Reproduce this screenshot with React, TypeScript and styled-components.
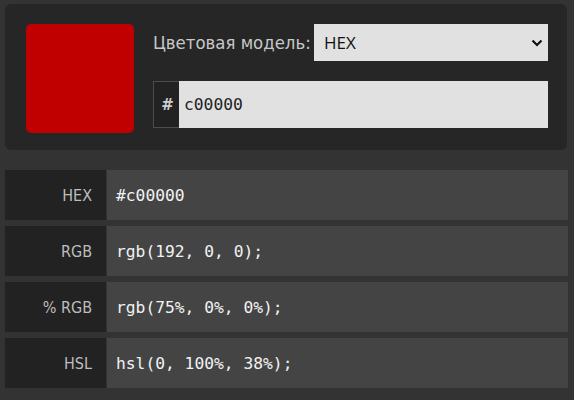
import React from "react";
import styled, { createGlobalStyle } from "styled-components";

const Global = createGlobalStyle`
  html, body { margin: 0; padding: 0; background: #333333; }
  body { font-family: "Open Sans", "Noto Sans", sans-serif; }
`;

const Page = styled.div`
  width: 574px;
  height: 400px;
  box-sizing: border-box;
  padding: 4px 6px 0 5px;
  display: flex;
  flex-direction: column;
  gap: 20px;
`;

const Panel = styled.section`
  background: #262626;
  border-radius: 6px;
  padding: 20px 19px 17px 21px;
  display: flex;
  gap: 19px;
  margin-right: 1px;
`;

const Swatch = styled.div<{ $color: string }>`
  width: 108px;
  height: 109px;
  border-radius: 5px;
  background: ${(p) => p.$color};
  flex: none;
`;

const Controls = styled.div`
  flex: 1;
  display: flex;
  flex-direction: column;
  gap: 20px;
`;

const ModelRow = styled.div`
  display: flex;
  align-items: center;
  gap: 6px;
`;

const ModelLabel = styled.label`
  font-family: "DejaVu Sans Condensed", "Open Sans", sans-serif;
  font-stretch: condensed;
  font-size: 18.4px;
  color: #c8c8c8;
  white-space: nowrap;
  width: 155px;
`;

const SelectWrap = styled.div`
  position: relative;
  flex: 1;
  height: 37px;
`;

const Select = styled.select`
  appearance: none;
  width: 100%;
  height: 100%;
  border: none;
  border-radius: 0;
  background: #e1e1e1;
  color: #111;
  font-family: "Open Sans", sans-serif;
  font-size: 17px;
  padding: 0 0 0 10px;
  outline: none;
`;

const Chevron = styled.svg`
  position: absolute;
  right: 5px;
  top: 15px;
  pointer-events: none;
`;

const HashRow = styled.div`
  display: flex;
  height: 47px;
`;

const HashMark = styled.span`
  box-sizing: border-box;
  border: 1px solid #4c4c4c;
  border-right: none;
  background: #222;
  color: #cfcfcf;
  font-family: "DejaVu Sans", sans-serif;
  font-weight: bold;
  font-size: 15px;
  display: flex;
  align-items: center;
  justify-content: center;
  padding-left: 2px;
  width: 26px;
`;

const HexInput = styled.input`
  flex: 1;
  border: none;
  border-radius: 0;
  background: #e1e1e1;
  color: #222;
  font-family: "DejaVu Sans Mono", monospace;
  font-size: 16.3px;
  padding: 0 0 0 5px;
  outline: none;
`;

const Rows = styled.div`
  display: flex;
  flex-direction: column;
  gap: 6px;
`;

const Row = styled.div`
  display: grid;
  grid-template-columns: 101px 1fr;
  gap: 1px;
  height: 50px;
`;

const RowLabel = styled.div`
  background: #222222;
  color: #bdbdbd;
  font-family: "DejaVu Sans Condensed", "Open Sans", sans-serif;
  font-stretch: condensed;
  font-size: 16px;
  display: flex;
  align-items: center;
  justify-content: flex-end;
  padding-right: 14px;
`;

const RowValue = styled.div`
  background: #444444;
  color: #f2f2f2;
  font-family: "DejaVu Sans Mono", monospace;
  font-size: 16.3px;
  display: flex;
  align-items: center;
  padding-left: 9px;
`;

const formats = [
  { label: "HEX", value: "#c00000" },
  { label: "RGB", value: "rgb(192, 0, 0);" },
  { label: "% RGB", value: "rgb(75%, 0%, 0%);" },
  { label: "HSL", value: "hsl(0, 100%, 38%);" },
];

export default function App() {
  return (
    <>
      <Global />
      <Page>
        <Panel>
          <Swatch $color="#c00000" />
          <Controls>
            <ModelRow>
              <ModelLabel>Цветовая модель:</ModelLabel>
              <SelectWrap>
                <Select defaultValue="HEX">
                  <option value="HEX">HEX</option>
                  <option value="RGB">RGB</option>
                  <option value="HSL">HSL</option>
                </Select>
                <Chevron width="12" height="8" viewBox="0 0 12 8">
                  <path d="M1.5 1.5 L6 6 L10.5 1.5" fill="none" stroke="#111" strokeWidth="2.2" />
                </Chevron>
              </SelectWrap>
            </ModelRow>
            <HashRow>
              <HashMark>#</HashMark>
              <HexInput defaultValue="c00000" />
            </HashRow>
          </Controls>
        </Panel>
        <Rows>
          {formats.map((f) => (
            <Row key={f.label}>
              <RowLabel>{f.label}</RowLabel>
              <RowValue>{f.value}</RowValue>
            </Row>
          ))}
        </Rows>
      </Page>
    </>
  );
}
